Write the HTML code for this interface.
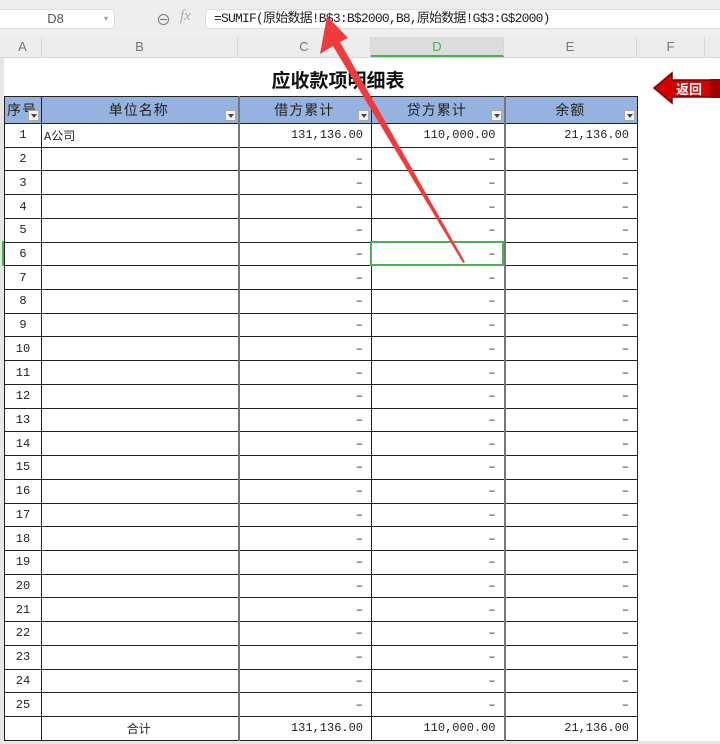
<!DOCTYPE html>
<html><head><meta charset="utf-8"><style>
*{margin:0;padding:0;box-sizing:border-box}
body{width:720px;height:744px;overflow:hidden;background:#fff;font-family:"Liberation Sans","Noto Sans CJK SC",sans-serif;position:relative}
.top{position:absolute;left:0;top:0;width:720px;height:37px;background:#eeeeee}
.nb{position:absolute;left:-4px;top:9px;width:119px;height:20px;background:#fff;border:1px solid #ddd;border-radius:4px;font-size:13px;color:#555;text-align:center;line-height:18px}
.fb{position:absolute;left:205px;top:9px;width:520px;height:20px;background:#fff;border:1px solid #ddd;border-radius:4px;font-family:"Liberation Mono","Noto Sans CJK SC",monospace;font-size:13px;line-height:18px;padding-left:8px;color:#222;letter-spacing:-0.8px}
.ch{position:absolute;top:37px;height:21px;background:#ececec;border-bottom:1px solid #d4d4d4;width:720px;left:0}
.ch div{position:absolute;top:0;height:20px;line-height:20px;text-align:center;color:#777;font-size:13px;border-right:1px solid #d8d8d8}
.sheet{position:absolute;left:0;top:58px;width:720px;height:686px;background:#fff}
.lg{position:absolute;left:0;top:58px;width:4px;height:686px;background:#e6e6e6}
h1{position:absolute;left:238px;width:200px;top:66px;font-size:19px;text-align:center;font-weight:bold;color:#111;font-family:"Liberation Sans","Noto Sans CJK SC",sans-serif}
table{position:absolute;left:4px;top:96px;border-collapse:collapse;table-layout:fixed;width:633px;font-family:"Liberation Mono","Noto Sans CJK SC",monospace;font-size:12px;color:#222}
td,th{border:1px solid #222;height:23.72px;padding:0 8px 0 6px;overflow:hidden;white-space:nowrap}
th{height:27px;background:#95b3de;font-weight:normal;font-size:14px;font-family:"Liberation Sans","Noto Sans CJK SC",sans-serif;position:relative;letter-spacing:1px}
th i{position:absolute;right:2px;bottom:2px;width:11px;height:11px;background:#f2f2f2;border:1px solid #aaa;font-style:normal}
th i:after{content:"";position:absolute;left:2px;top:3px;border-left:3px solid transparent;border-right:3px solid transparent;border-top:4px solid #444}
td:nth-child(1){text-align:center;padding:0}
td:nth-child(n+3){text-align:right}
td:nth-child(2),th:nth-child(2){border-right:2px solid #777}
td:nth-child(4),th:nth-child(4){border-right:2px solid #777}
.sel{position:absolute;left:370px;top:241px;width:134px;height:25px;border:2px solid #4caf50}
</style></head><body>
<div class="top">
<div class="nb">D8<span style="position:absolute;right:6px;font-size:8px;color:#999">▾</span></div>
<div style="position:absolute;left:156px;top:9px;font-size:15px;color:#777">⊖</div>
<div style="position:absolute;left:180px;top:8px;font-size:15px;color:#aaa;font-style:italic;font-family:'Liberation Serif',serif">fx</div>
<div class="fb">=SUMIF(原始数据!B$3:B$2000,B8,原始数据!G$3:G$2000)</div>
</div>
<div class="ch">
<div style="left:4px;width:38px">A</div>
<div style="left:42px;width:196px">B</div>
<div style="left:238px;width:133px">C</div>
<div style="left:371px;width:133px;background:#dcdcdc;color:#4caf50;border-bottom:2px solid #4caf50">D</div>
<div style="left:504px;width:133px">E</div>
<div style="left:637px;width:68px">F</div>
</div>
<div class="sheet"></div>
<div class="lg"></div>
<h1>应收款项明细表</h1>
<svg style="position:absolute;left:652px;top:70px" width="68" height="36"><polygon points="2,18 20,3 20,10 68,10 68,27 20,27 20,33" fill="#d40000" stroke="#700" stroke-width="1.5"/><rect x="58" y="9" width="10" height="19" fill="#a00000"/><text x="24" y="24" fill="#fff" font-size="13" font-weight="bold" font-family="Noto Sans CJK SC,sans-serif">返回</text></svg>
<table>
<colgroup><col style="width:37px"><col style="width:197px"><col style="width:133px"><col style="width:133px"><col style="width:133px"></colgroup>
<tr><th style="text-align:left;padding-left:2px">序号<i></i></th><th>单位名称<i></i></th><th>借方累计<i></i></th><th>贷方累计<i></i></th><th>余额<i></i></th></tr>
<tr><td>1</td><td style="padding-left:2px">A公司</td><td>131,136.00</td><td>110,000.00</td><td>21,136.00</td></tr>
<tr><td>2</td><td></td><td>–</td><td>–</td><td>–</td></tr>
<tr><td>3</td><td></td><td>–</td><td>–</td><td>–</td></tr>
<tr><td>4</td><td></td><td>–</td><td>–</td><td>–</td></tr>
<tr><td>5</td><td></td><td>–</td><td>–</td><td>–</td></tr>
<tr><td>6</td><td></td><td>–</td><td>–</td><td>–</td></tr>
<tr><td>7</td><td></td><td>–</td><td>–</td><td>–</td></tr>
<tr><td>8</td><td></td><td>–</td><td>–</td><td>–</td></tr>
<tr><td>9</td><td></td><td>–</td><td>–</td><td>–</td></tr>
<tr><td>10</td><td></td><td>–</td><td>–</td><td>–</td></tr>
<tr><td>11</td><td></td><td>–</td><td>–</td><td>–</td></tr>
<tr><td>12</td><td></td><td>–</td><td>–</td><td>–</td></tr>
<tr><td>13</td><td></td><td>–</td><td>–</td><td>–</td></tr>
<tr><td>14</td><td></td><td>–</td><td>–</td><td>–</td></tr>
<tr><td>15</td><td></td><td>–</td><td>–</td><td>–</td></tr>
<tr><td>16</td><td></td><td>–</td><td>–</td><td>–</td></tr>
<tr><td>17</td><td></td><td>–</td><td>–</td><td>–</td></tr>
<tr><td>18</td><td></td><td>–</td><td>–</td><td>–</td></tr>
<tr><td>19</td><td></td><td>–</td><td>–</td><td>–</td></tr>
<tr><td>20</td><td></td><td>–</td><td>–</td><td>–</td></tr>
<tr><td>21</td><td></td><td>–</td><td>–</td><td>–</td></tr>
<tr><td>22</td><td></td><td>–</td><td>–</td><td>–</td></tr>
<tr><td>23</td><td></td><td>–</td><td>–</td><td>–</td></tr>
<tr><td>24</td><td></td><td>–</td><td>–</td><td>–</td></tr>
<tr><td>25</td><td></td><td>–</td><td>–</td><td>–</td></tr>
<tr><td></td><td style="text-align:center;font-family:'Noto Sans CJK SC',sans-serif">合计</td><td>131,136.00</td><td>110,000.00</td><td>21,136.00</td></tr>
</table>
<div class="sel"></div>
<div style="position:absolute;left:2px;top:241px;width:2px;height:25px;background:#4caf50"></div>
<div style="position:absolute;left:0;top:741px;width:720px;height:3px;background:#e6e6e6"></div>
<svg style="position:absolute;left:0;top:0" width="720" height="744"><polygon points="327,16 348,38 340,42 465,262 463,263 333,46 320,54" fill="#ee3b3b"/></svg>
</body></html>
